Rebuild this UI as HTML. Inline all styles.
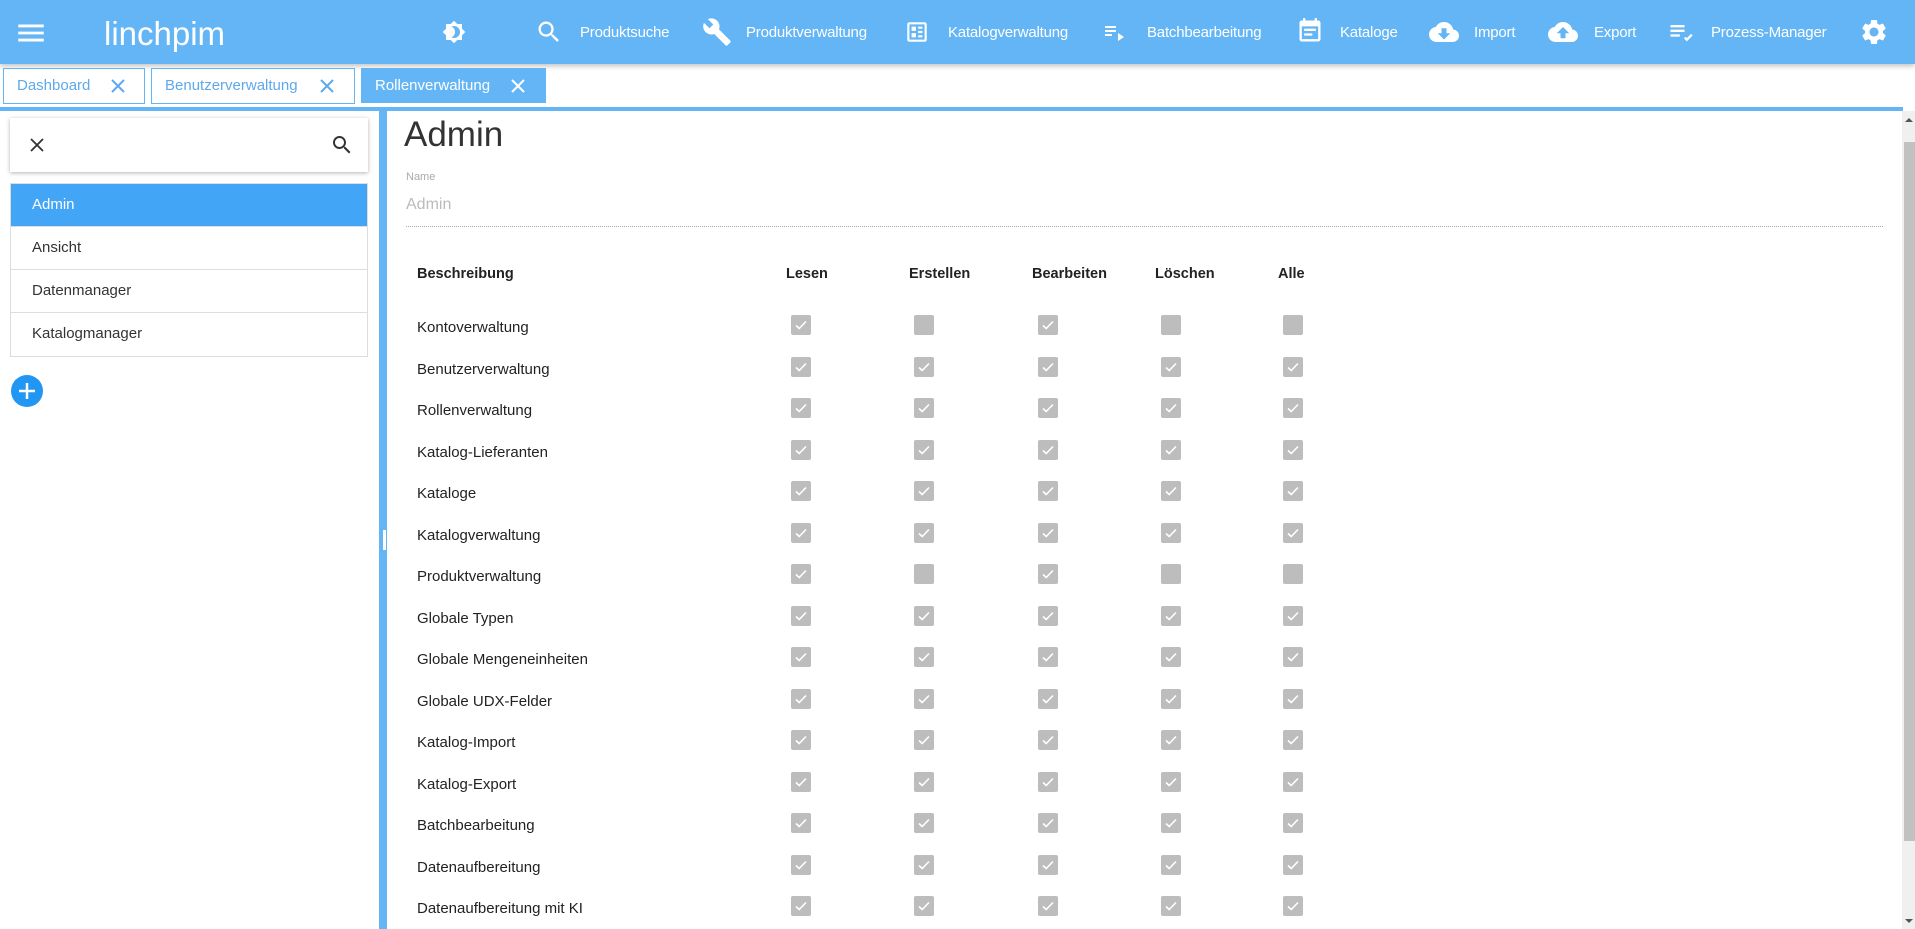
<!DOCTYPE html>
<html><head><meta charset="utf-8">
<style>
*{box-sizing:border-box;margin:0;padding:0}
body{width:1915px;height:929px;overflow:hidden;background:#fff;font-family:"Liberation Sans",sans-serif;position:relative;color:#222}
.hdr{position:absolute;left:0;top:0;width:1915px;height:64px;background:#64b5f6;box-shadow:0 2px 5px rgba(0,0,0,.25)}
.hdr svg{position:absolute;fill:#fff}
.hdr .t{position:absolute;color:#fff;font-size:15px;top:24px;letter-spacing:-0.2px}
.logo{position:absolute;left:104px;top:15px;color:#fff;font-size:33px}
.tab{position:absolute;top:68px;height:36px;border:1px solid #64b5f6;color:#5ea9ea;font-size:15px;line-height:34px;padding-left:13px}
.tab.act{background:#64b5f6;color:#fff}
.tab svg{position:absolute;top:10px;stroke:currentColor;stroke-width:2;fill:none}
.hline{position:absolute;left:0;top:107px;width:1903px;height:4px;background:#64b5f6}
.vdiv{position:absolute;left:379px;top:107px;width:8px;height:822px;background:#64b5f6}
.search{position:absolute;left:10px;top:118px;width:358px;height:54px;background:#fff;box-shadow:0 1px 4px rgba(0,0,0,.3)}
.list{position:absolute;left:10px;top:183px;width:358px;border:1px solid #ddd}
.list div{height:43px;line-height:42px;padding-left:21px;font-size:15px;border-bottom:1px solid #ddd;color:#333}
.list div.sel{background:#42a5f5;color:#fff}
.plus{position:absolute;left:11px;top:375px;width:32px;height:32px;border-radius:50%;background:#2196f3}
.title{position:absolute;left:404px;top:115px;font-size:35px;font-weight:300;color:#333}
.nl{position:absolute;left:406px;top:171px;font-size:11px;color:#aaa}
.nv{position:absolute;left:406px;top:196px;font-size:16px;color:#bbb}
.ul{position:absolute;left:406px;top:226px;width:1477px;border-top:1px dotted #aaa}
.th{position:absolute;top:266px;font-size:14.5px;font-weight:bold;color:#222}
.rl{position:absolute;left:417px;font-size:15px;color:#222}
.cb{position:absolute;width:20px;height:20px;border-radius:2px;background:#bdbdbd}
.sb{position:absolute;left:1902px;top:111px;width:13px;height:818px;background:#f0f0f0}
.thumb{position:absolute;left:1904px;top:142px;width:11px;height:699px;background:#c1c1c1}
</style></head><body>
<div class="hdr">
<svg style="left:14px;top:16px" width="34" height="34" viewBox="0 0 24 24"><path d="M3 18h18v-2H3v2zm0-5h18v-2H3v2zm0-7v2h18V6H3z"/></svg>
<div class="logo">linchpim</div>
<svg style="left:442px;top:20px" width="24" height="24" viewBox="0 0 24 24"><path d="M20 8.69V4h-4.69L12 .69 8.69 4H4v4.690L.69 12 4 15.31V20h4.69L12 23.31 15.31 20H20v-4.69L23.31 12 20 8.69zM12 18c-.89 0-1.74-.2-2.5-.55C11.56 16.5 13 14.42 13 12s-1.44-4.5-3.5-5.45C10.26 6.2 11.11 6 12 6c3.31 0 6 2.69 6 6s-2.690 6-6 6z"/></svg>
<svg style="left:535px;top:18px" width="28" height="28" viewBox="0 0 24 24"><path d="M15.5 14h-.79l-.28-.27C15.41 12.59 16 11.11 16 9.5 16 5.91 13.09 3 9.5 3S3 5.91 3 9.5 5.91 16 9.5 16c1.61 0 3.09-.59 4.23-1.57l.27.28v.79l5 4.99L20.49 19l-4.99-5zm-6 0C7.01 14 5 11.99 5 9.5S7.01 5 9.5 5 14 7.01 14 9.5 11.99 14 9.5 14z"/></svg>
<div class="t" style="left:580px">Produktsuche</div>
<svg style="left:702px;top:17px" width="30" height="30" viewBox="0 0 24 24"><path d="M22.7 19l-9.1-9.1c.9-2.3.4-5-1.5-6.9-2-2-5-2.4-7.4-1.3L9 6 6 9 1.6 4.7C.4 7.1.9 10.1 2.9 12.1c1.9 1.9 4.6 2.4 6.9 1.5l9.1 9.1c.4.4 1 .4 1.4 0l2.3-2.3c.5-.4.5-1.1.1-1.4z"/></svg>
<div class="t" style="left:746px">Produktverwaltung</div>
<svg style="left:904px;top:19px" width="26" height="26" viewBox="0 0 24 24"><path d="M19 3H5a2 2 0 0 0-2 2v14a2 2 0 0 0 2 2h14a2 2 0 0 0 2-2V5a2 2 0 0 0-2-2zm0 16H5V5h14v14zM7 7h4v4H7zm0 6h4v4H7zm6-6h4v2h-4zm0 4h4v2h-4zm0 4h4v2h-4z"/></svg>
<div class="t" style="left:948px">Katalogverwaltung</div>
<svg style="left:1102px;top:20px" width="24" height="24" viewBox="0 0 24 24"><path d="M3 10h11v2H3zm0-4h11v2H3zm0 8h7v2H3zm13-1v8l6-4z"/></svg>
<div class="t" style="left:1147px">Batchbearbeitung</div>
<svg style="left:1296px;top:17px" width="28" height="28" viewBox="0 0 24 24"><path d="M19 3h-1V1h-2v2H8V1H6v2H5c-1.1 0-2 .9-2 2v14c0 1.1.9 2 2 2h14c1.1 0 2-.9 2-2V5c0-1.1-.9-2-2-2zm0 16H5V8h14v11zM7 10h10v2H7zm0 4h7v2H7z"/></svg>
<div class="t" style="left:1340px">Kataloge</div>
<svg style="left:1429px;top:17px" width="30" height="30" viewBox="0 0 24 24"><path d="M19.35 10.04A7.49 7.49 0 0 0 12 4C9.11 4 6.6 5.64 5.35 8.04A5.994 5.994 0 0 0 0 14c0 3.31 2.69 6 6 6h13c2.76 0 5-2.24 5-5 0-2.64-2.05-4.78-4.65-4.96zM17 13l-5 5-5-5h3V9h4v4h3z"/></svg>
<div class="t" style="left:1474px">Import</div>
<svg style="left:1548px;top:17px" width="30" height="30" viewBox="0 0 24 24"><path d="M19.35 10.04A7.49 7.49 0 0 0 12 4C9.11 4 6.6 5.64 5.35 8.04A5.994 5.994 0 0 0 0 14c0 3.31 2.69 6 6 6h13c2.76 0 5-2.24 5-5 0-2.64-2.05-4.78-4.65-4.96zM14 13v4h-4v-4H7l5-5 5 5h-3z"/></svg>
<div class="t" style="left:1594px">Export</div>
<svg style="left:1667px;top:18px" width="28" height="28" viewBox="0 0 24 24"><path d="M3 6h12v2H3zm0 4h12v2H3zm0 4h8v2H3zm11.5 3.5l2.5 2.5 5-5-1.4-1.4-3.6 3.6-1.1-1.1z"/></svg>
<div class="t" style="left:1711px">Prozess-Manager</div>
<svg style="left:1859px;top:17px" width="30" height="30" viewBox="0 0 24 24"><path d="M19.14 12.94c.04-.3.06-.61.06-.94 0-.32-.02-.64-.07-.94l2.030-1.58a.49.49 0 0 0 .12-.61l-1.92-3.32a.488.488 0 0 0-.59-.22l-2.39.96c-.5-.38-1.03-.7-1.62-.94l-.36-2.54a.484.484 0 0 0-.48-.41h-3.84c-.24 0-.43.17-.47.41l-.36 2.54c-.59.24-1.13.57-1.62.94l-2.39-.96c-.22-.08-.47 0-.59.22L2.74 8.87c-.12.21-.08.47.12.61l2.03 1.58c-.05.3-.09.63-.09.94s.02.64.07.94l-2.03 1.58a.49.49 0 0 0-.12.61l1.92 3.32c.12.22.37.29.59.22l2.39-.96c.5.38 1.03.7 1.62.94l.36 2.54c.05.24.24.41.48.41h3.84c.24 0 .44-.17.47-.41l.36-2.54c.59-.24 1.13-.56 1.62-.94l2.39.96c.22.08.47 0 .59-.22l1.92-3.32c.12-.22.07-.47-.12-.61l-2.01-1.58zM12 15.6c-1.98 0-3.6-1.62-3.6-3.6s1.62-3.6 3.6-3.6 3.6 1.62 3.6 3.6-1.62 3.6-3.6 3.6z"/></svg>
</div>

<div class="tab" style="left:3px;width:142px">Dashboard<svg style="left:107px" width="14" height="14" viewBox="0 0 14 14"><path d="M1 1l12 12M13 1L1 13"/></svg></div>
<div class="tab" style="left:151px;width:204px">Benutzerverwaltung<svg style="left:168px" width="14" height="14" viewBox="0 0 14 14"><path d="M1 1l12 12M13 1L1 13"/></svg></div>
<div class="tab act" style="left:361px;width:185px;top:68px;height:35px">Rollenverwaltung<svg style="left:149px" width="14" height="14" viewBox="0 0 14 14"><path d="M1 1l12 12M13 1L1 13"/></svg></div>
<div class="hline"></div>
<div class="vdiv"></div>
<div style="position:absolute;left:383px;top:530px;width:3px;height:20px;background:#fff"></div>

<div class="search">
<svg style="position:absolute;left:20px;top:20px" width="14" height="14" viewBox="0 0 14 14"><path d="M1 1l12 12M13 1L1 13" stroke="#333" stroke-width="1.8"/></svg>
<svg style="position:absolute;left:320px;top:15px" width="24" height="24" viewBox="0 0 24 24"><path fill="#333" d="M15.5 14h-.79l-.28-.27C15.41 12.59 16 11.11 16 9.5 16 5.91 13.09 3 9.5 3S3 5.91 3 9.5 5.91 16 9.5 16c1.61 0 3.09-.59 4.23-1.57l.27.28v.79l5 4.99L20.49 19l-4.99-5zm-6 0C7.01 14 5 11.99 5 9.5S7.01 5 9.5 5 14 7.01 14 9.5 11.99 14 9.5 14z"/></svg>
</div>
<div class="list">
<div class="sel">Admin</div><div>Ansicht</div><div>Datenmanager</div><div style="border-bottom:none">Katalogmanager</div>
</div>
<div class="plus"><svg width="32" height="32" viewBox="0 0 32 32"><path d="M16 8v16M8 16h16" stroke="#fff" stroke-width="2.5"/></svg></div>

<div class="title">Admin</div>
<div class="nl">Name</div>
<div class="nv">Admin</div>
<div class="ul"></div>

<div class="th" style="left:417px">Beschreibung</div>
<div class="th" style="left:786px">Lesen</div>
<div class="th" style="left:909px">Erstellen</div>
<div class="th" style="left:1032px">Bearbeiten</div>
<div class="th" style="left:1155px">Löschen</div>
<div class="th" style="left:1278px">Alle</div>

<div id="rows"></div>
<script>
var names=["Kontoverwaltung","Benutzerverwaltung","Rollenverwaltung","Katalog-Lieferanten","Kataloge","Katalogverwaltung","Produktverwaltung","Globale Typen","Globale Mengeneinheiten","Globale UDX-Felder","Katalog-Import","Katalog-Export","Batchbearbeitung","Datenaufbereitung","Datenaufbereitung mit KI"];
var xs=[791,914,1038,1161,1283];
var h="";
names.forEach(function(n,i){
 var cy=325+i*41.5;
 h+='<div class="rl" style="top:'+(cy-6)+'px">'+n+'</div>';
 xs.forEach(function(x,j){
  var un=(i==0||i==6)&&(j==1||j==3||j==4);
  h+='<div class="cb" style="left:'+x+'px;top:'+(cy-10)+'px">'+(un?'':'<svg width="20" height="20" viewBox="0 0 20 20"><path d="M5 10.5l3.2 3L15 6.5" stroke="#fff" stroke-width="1.6" fill="none"/></svg>')+'</div>';
 });
});
document.getElementById('rows').innerHTML=h;
</script>

<div class="sb"></div>
<div class="thumb"></div>
<svg style="position:absolute;left:1905px;top:117px" width="8" height="6" viewBox="0 0 8 6"><path d="M0 5h8L4 1z" fill="#555"/></svg>
<svg style="position:absolute;left:1905px;top:918px" width="8" height="6" viewBox="0 0 8 6"><path d="M0 1h8L4 5z" fill="#555"/></svg>
</body></html>
